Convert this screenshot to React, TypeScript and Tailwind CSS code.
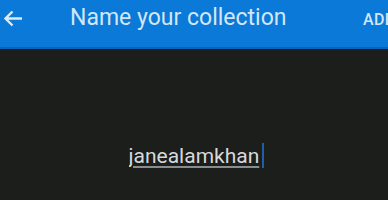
import React, { useState } from "react";

const App = () => {
  const [name, setName] = useState("janealamkhan");

  return (
    <div className="w-[388px] h-[200px] overflow-hidden bg-[#1b1e1b] font-['Roboto',sans-serif]">
      <div className="h-[49px] bg-[#0a79d7] border-b-2 border-[#0864b8] flex items-start relative">
        <button className="ml-[3px] mt-[10px] w-[20px] h-[17px] flex items-center text-[#d9ebf8]">
          <svg width="20" height="17" viewBox="0 0 20 17" fill="none">
            <path
              d="M19 8.5H2.5M9.5 1.5L2.5 8.5L9.5 15.5"
              stroke="currentColor"
              strokeWidth="2.4"
            />
          </svg>
        </button>
        <h1 className="ml-[47px] mt-[6px] text-[23px] leading-none text-[#d3e6f6] whitespace-nowrap">
          Name your collection
        </h1>
        <span className="absolute left-[363px] top-[12px] text-[16px] font-medium leading-none text-[#d3e6f6] tracking-wide">
          ADD
        </span>
      </div>
      <div className="flex justify-center pt-[94px]">
        <div className="flex items-end">
          <input
            value={name}
            onChange={(e) => setName(e.target.value)}
            className="w-[133px] bg-transparent text-[21px] leading-[26px] text-[#d6d9dc] underline decoration-[#8a8d90] underline-offset-[3px] outline-none p-0 ml-[4px]"
          />
          <div className="w-[2px] h-[25px] bg-[#1d5fa8] mb-[1px]"></div>
        </div>
      </div>
    </div>
  );
};

export default App;
